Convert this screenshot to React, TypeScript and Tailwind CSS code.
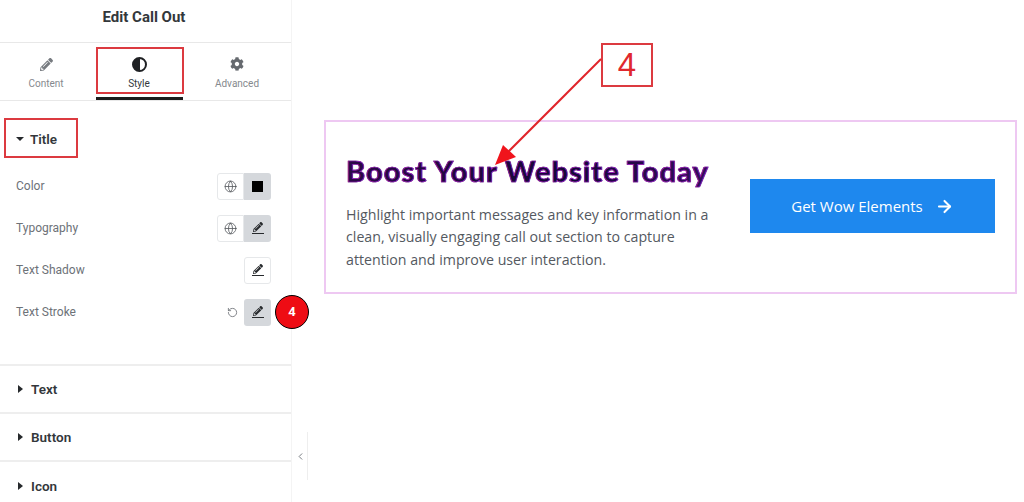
import { ChevronLeft, Globe, RotateCcw, ArrowRight } from "lucide-react";
import { FaCog, FaPencilAlt } from "react-icons/fa";

const roboto = "font-['Roboto',sans-serif]";

function EditIcon() {
  return (
    <span className="flex flex-col items-center">
      <FaPencilAlt size={10} color="#26292c" />
      <span className="mt-[1px] h-[1.5px] w-[12px] bg-[#26292c]" />
    </span>
  );
}

function GlobeButton() {
  return (
    <span className="flex h-[27px] w-[27px] items-center justify-center rounded-l-[3px] border border-[#e6e8ea] bg-white">
      <Globe size={13} color="#55595e" strokeWidth={1.5} />
    </span>
  );
}

function ControlRow({ label, children }: { label: string; children: React.ReactNode }) {
  return (
    <div className="flex h-[42px] items-center justify-between pl-[16px] pr-[20px]">
      <span className="text-[12px] text-[#6d7278]">{label}</span>
      <div className="flex items-center">{children}</div>
    </div>
  );
}

function Section({ label }: { label: string }) {
  return (
    <div className="flex h-[48px] shrink-0 items-center gap-[8px] border-b-2 border-[#eeeeee] pl-[18px] last:border-b-0">
      <span className="h-0 w-0 border-y-[4px] border-l-[5px] border-y-transparent border-l-[#26292c]" />
      <span className="text-[13.5px] font-semibold text-[#33373b]">{label}</span>
    </div>
  );
}

function Tab({ label, active, width, children }: { label: string; active?: boolean; width: string; children: React.ReactNode }) {
  return (
    <div className={`flex flex-col items-center pt-[12px] ${width} ${active ? "text-[#33373b]" : "text-[#85898e]"}`}>
      <div className="flex h-[18px] items-center">{children}</div>
      <span className="mt-[5px] text-[10px] leading-[12px]">{label}</span>
    </div>
  );
}

function Sidebar() {
  return (
    <aside className={`flex h-[502px] w-[292px] shrink-0 flex-col overflow-hidden border-r border-[#f4f4f4] ${roboto}`}>
      <div className="flex h-[43px] shrink-0 items-center justify-center border-b border-[#e8e8e8] pb-[7px] pr-[3px] text-[15px] font-bold text-[#33373b]">
        Edit Call Out
      </div>
      <div className="flex h-[58px] shrink-0 border-b border-[#e8e8e8]">
        <Tab label="Content" width="w-[92px]">
          <FaPencilAlt size={13} color="#777b80" />
        </Tab>
        <Tab label="Style" active width="w-[94px]">
          <span className="h-[15px] w-[15px] rounded-full border-[2px] border-[#1f2124] bg-[linear-gradient(90deg,#1f2124_50%,#fff_50%)]" />
        </Tab>
        <Tab label="Advanced" width="w-[102px]">
          <FaCog size={14} color="#666a6f" />
        </Tab>
      </div>
      <div className="flex h-[64px] shrink-0 items-center gap-[6px] pl-[16px] pt-[12px]">
        <span className="h-0 w-0 border-x-[4px] border-t-[4px] border-x-transparent border-t-[#26292c]" />
        <span className="text-[13.5px] font-semibold text-[#33373b]">Title</span>
      </div>
      <div className="h-[201px] shrink-0 border-b-2 border-[#eeeeee]">
        <ControlRow label="Color">
          <GlobeButton />
          <span className="flex h-[27px] w-[27px] items-center justify-center rounded-r-[3px] bg-[#d5d8dc]">
            <span className="h-[11px] w-[11px] bg-black" />
          </span>
        </ControlRow>
        <ControlRow label="Typography">
          <GlobeButton />
          <span className="flex h-[27px] w-[27px] items-center justify-center rounded-r-[3px] bg-[#d5d8dc]">
            <EditIcon />
          </span>
        </ControlRow>
        <ControlRow label="Text Shadow">
          <span className="flex h-[27px] w-[27px] items-center justify-center rounded-[3px] border border-[#e6e8ea] bg-white">
            <EditIcon />
          </span>
        </ControlRow>
        <ControlRow label="Text Stroke">
          <RotateCcw size={11} color="#777b80" className="mr-[6px]" />
          <span className="flex h-[27px] w-[27px] items-center justify-center rounded-[3px] bg-[#d5d8dc]">
            <EditIcon />
          </span>
        </ControlRow>
      </div>
      <Section label="Text" />
      <Section label="Button" />
      <Section label="Icon" />
    </aside>
  );
}

function Annotations() {
  return (
    <>
      {/* red highlight boxes */}
      <div className="absolute left-[96px] top-[47px] h-[47px] w-[88px] border-2 border-[#dc3a40]" />
      <div className="absolute left-[96px] top-[97px] h-[3px] w-[87px] bg-[#1c1c1c]" />
      <div className="absolute left-[4px] top-[118px] h-[40px] w-[74px] border-2 border-[#dc3a40]" />
      <div className="absolute left-[275px] top-[295px] flex h-[34px] w-[34px] items-center justify-center rounded-full border border-black bg-[#ee0c14] font-['Roboto',sans-serif] text-[13px] font-bold text-white">
        4
      </div>
      <div className="absolute left-[601px] top-[43px] flex h-[44px] w-[52px] items-center justify-center border-2 border-[#dc3a40] bg-white font-['Liberation_Sans',sans-serif] text-[33px] text-[#e0282e]">
        4
      </div>
      <svg className="absolute left-[490px] top-[55px]" width="115" height="115" viewBox="0 0 115 115">
        <line x1="111" y1="4" x2="14" y2="101" stroke="#e0242a" strokeWidth="2" />
        <path d="M5 110 L13 90 L26 102 Z" fill="#f0141c" />
      </svg>
      {/* collapse handle */}
      <div className="absolute left-[293px] top-[432px] flex h-[48px] w-[15px] items-center justify-center border-r border-[#eeeeee] bg-white">
        <ChevronLeft size={11} color="#6d7278" strokeWidth={2} />
      </div>
    </>
  );
}

export default function App() {
  return (
    <div className="relative flex h-[502px] w-[1024px] overflow-hidden bg-white">
      <Sidebar />
      <main className="flex-1 pl-[32px] pt-[120px]">
        <section className="flex h-[174px] w-[693px] items-center justify-between border-2 border-[#eec8f2] pb-[2px] pl-[20px] pr-[20px]">
          <div className="w-[380px] pt-[12px]">
            <h2 className="whitespace-nowrap bg-[linear-gradient(90deg,#2c0848,#160638_60%,#3a0c60)] bg-clip-text font-['Lato',sans-serif] text-[29px] font-black leading-[36px] tracking-[1px] text-transparent [-webkit-text-stroke:0.7px_#a41fc4]">
              Boost Your Website Today
            </h2>
            <p className="mt-[15px] font-['Open_Sans',sans-serif] text-[14.2px] leading-[22.5px] text-[#54595f]">
              Highlight important messages and key information in a clean, visually engaging call out section to capture attention and improve user interaction.
            </p>
          </div>
          <a className="flex h-[54px] w-[245px] items-center justify-center gap-[12px] bg-[#1e88ee] font-['Open_Sans',sans-serif] text-[15px] text-white">
            Get Wow Elements
            <ArrowRight size={19} strokeWidth={2.6} />
          </a>
        </section>
      </main>
      <Annotations />
    </div>
  );
}
